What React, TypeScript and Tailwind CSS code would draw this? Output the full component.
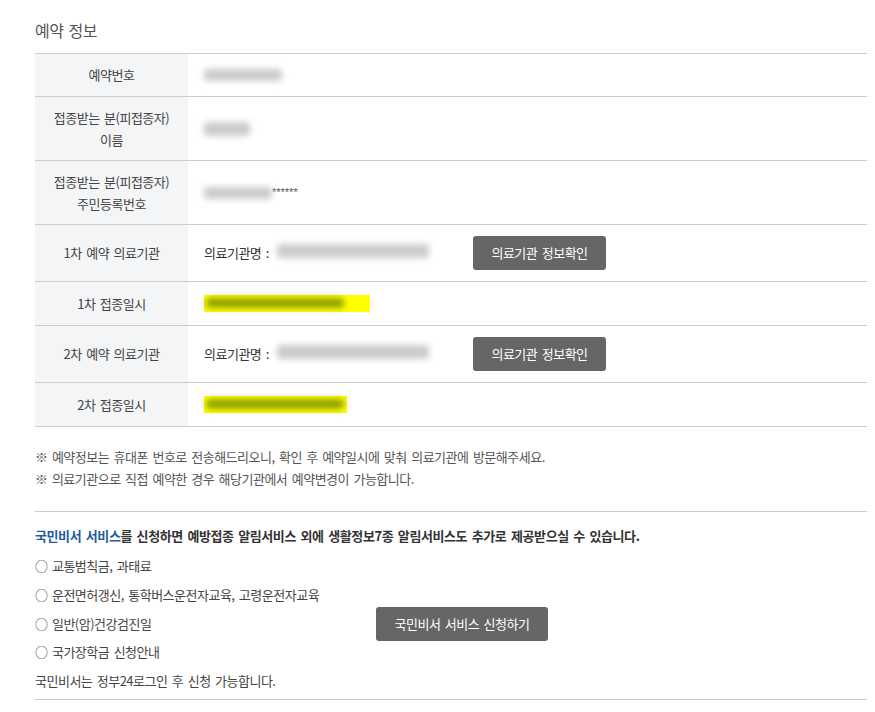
import React from 'react';

// blurred placeholder for masked personal data
const Masked = ({w, h = 12}: {w: number; h?: number}) => (
    <span className="inline-block rounded-sm bg-[#cbcbcb] blur-[3px]" style={{width: w, height: h}}/>
);

const Highlight = ({w, inner}: {w: number; inner: number}) => (
    <span className="relative inline-block h-[17px] bg-[#ffff00]" style={{width: w}}>
        <span className="absolute left-[2px] top-[3px] h-[10px] rounded-sm bg-[#8f9f00] blur-[3px]" style={{width: inner}}/>
    </span>
);

const GrayButton = ({label, w}: {label: string; w: number}) => (
    <button
        className="h-[34px] rounded-[3px] bg-[#666666] text-[13px] tracking-[-0.5px] [word-spacing:2px] text-white"
        style={{width: w}}
    >
        {label}
    </button>
);

const Hospital = () => (
    <div className="flex items-center">
        <span className="flex w-[269px] items-center">
            <span className="text-[#333]">의료기관명 :</span>
            <span className="ml-[8px]"><Masked w={152} h={14}/></span>
        </span>
        <GrayButton label="의료기관 정보확인" w={133}/>
    </div>
);

interface Row {
    label: React.ReactNode;
    value: React.ReactNode;
    h: string;
}

const rows: Row[] = [
    {label: '예약번호', value: <Masked w={78}/>, h: 'h-[43px]'},
    {label: <>접종받는 분(피접종자)<br/>이름</>, value: <Masked w={46} h={14}/>, h: 'h-[64px]'},
    {
        label: <>접종받는 분(피접종자)<br/>주민등록번호</>,
        value: (
            <span className="flex items-center">
                <Masked w={68}/>
                <span className="font-['Liberation_Sans',sans-serif] text-[11px] tracking-normal text-[#555]">******</span>
            </span>
        ),
        h: 'h-[64px]'
    },
    {label: '1차 예약 의료기관', value: <Hospital/>, h: 'h-[57px]'},
    {label: '1차 접종일시', value: <Highlight w={166} inner={138}/>, h: 'h-[44px]'},
    {label: '2차 예약 의료기관', value: <Hospital/>, h: 'h-[57px]'},
    {label: '2차 접종일시', value: <Highlight w={143} inner={138}/>, h: 'h-[44px]'},
];

const services = [
    '교통범칙금, 과태료',
    '운전면허갱신, 통학버스운전자교육, 고령운전자교육',
    '일반(암)건강검진일',
    '국가장학금 신청안내',
];

export default function App() {
    return (
        <div className="min-h-screen bg-white font-['Noto_Sans_CJK_KR','Noto_Sans',sans-serif] text-[13px] tracking-[-0.5px] [word-spacing:2px] text-[#333]">
            <div className="ml-[35px] w-[832px] pt-[20px]">
                <h2 className="mb-[13px] text-[16px] leading-[20px] tracking-[-0.5px] font-normal text-[#555]">예약 정보</h2>

                <div className="border-t border-[#cccccc]">
                    {rows.map((row, i) => (
                        <div key={i} className={`flex border-b border-[#cccccc] ${row.h}`}>
                            <div className="flex w-[153px] shrink-0 items-center justify-center bg-[#f4f5f7] text-center leading-[22px] text-[#444]">
                                {row.label}
                            </div>
                            <div className="flex flex-1 items-center pl-[16px]">
                                {row.value}
                            </div>
                        </div>
                    ))}
                </div>

                <div className="mt-[19px] leading-[22px] text-[#555]">
                    <p>※ 예약정보는 휴대폰 번호로 전송해드리오니, 확인 후 예약일시에 맞춰 의료기관에 방문해주세요.</p>
                    <p>※ 의료기관으로 직접 예약한 경우 해당기관에서 예약변경이 가능합니다.</p>
                </div>

                <div className="mt-[21px] border-t border-[#cccccc] pt-[13px]">
                    <p className="font-bold leading-[22px] tracking-[-0.4px] text-[#333]">
                        <span className="text-[#1f5d9c]">국민비서 서비스</span>를 신청하면 예방접종 알림서비스 외에 생활정보7종 알림서비스도 추가로 제공받으실 수 있습니다.
                    </p>
                    <div className="mt-[5px] flex items-center">
                        <div className="w-[341px] text-[#444]">
                            {services.map(s => (
                                <div key={s} className="h-[28.75px] leading-[28.75px]">○ {s}</div>
                            ))}
                            <div className="h-[28.75px] leading-[28.75px]">국민비서는 정부24로그인 후 신청 가능합니다.</div>
                        </div>
                        <GrayButton label="국민비서 서비스 신청하기" w={172}/>
                    </div>
                    <div className="mt-[3px] border-b border-[#cccccc]"/>
                </div>
            </div>
        </div>
    );
}
